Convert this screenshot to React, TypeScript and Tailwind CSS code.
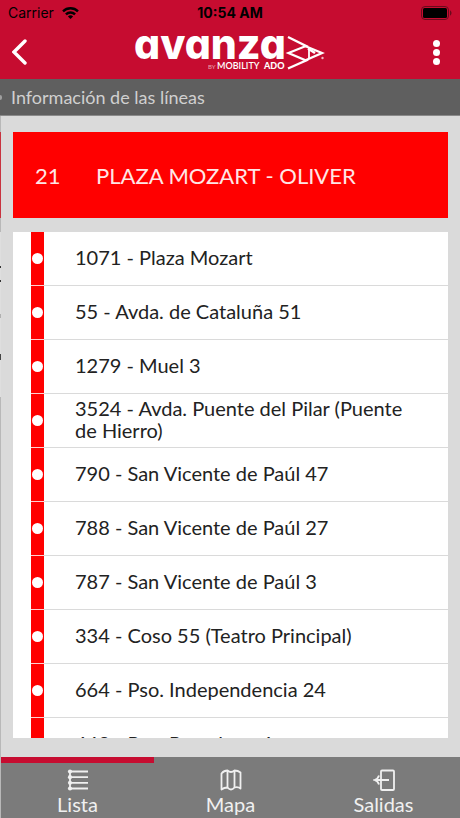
import React, { useState } from 'react';

interface Stop {
  code: string;
  name: string;
}

const stops: Stop[] = [
  { code: '1071', name: 'Plaza Mozart' },
  { code: '55', name: 'Avda. de Cataluña 51' },
  { code: '1279', name: 'Muel 3' },
  { code: '3524', name: 'Avda. Puente del Pilar (Puente de Hierro)' },
  { code: '790', name: 'San Vicente de Paúl 47' },
  { code: '788', name: 'San Vicente de Paúl 27' },
  { code: '787', name: 'San Vicente de Paúl 3' },
  { code: '334', name: 'Coso 55 (Teatro Principal)' },
  { code: '664', name: 'Pso. Independencia 24' },
  { code: '443', name: 'Pso. Pamplona 4' },
];

function StatusBar() {
  return (
    <div className="grid grid-cols-3 items-center h-6 px-2 text-sm text-black font-[Inter,sans-serif]">
      <div className="flex items-center gap-2">
        <span>Carrier</span>
        <svg width="17" height="12" viewBox="0 0 17 12" fill="none" stroke="currentColor" strokeWidth="2.4">
          <path d="M1 4.3a10.8 10.8 0 0 1 15 0" />
          <path d="M3.9 7.4a6.6 6.6 0 0 1 9.2 0" />
          <path d="M8.5 12 5.9 9.5a3.7 3.7 0 0 1 5.2 0z" fill="currentColor" stroke="none" />
        </svg>
      </div>
      <span className="text-center font-bold">10:54 AM</span>
      <svg className="justify-self-end" width="31" height="14" viewBox="0 0 31 14">
        <rect x="0.5" y="0.5" width="27" height="13" rx="3.5" fill="none" stroke="#6b0a1c" />
        <rect x="2" y="2" width="24" height="10" rx="1.5" />
        <path d="M29 4.5c2 .6 2 4.4 0 5z" fill="#6b0a1c" />
      </svg>
    </div>
  );
}

function Logo() {
  return (
    <svg width="196" height="42" viewBox="0 0 196 42" className="text-white" fill="currentColor" role="img" aria-label="avanza by Mobility ADO">
      <text x="5" y="28" fontSize="41" className="font-[Inter,sans-serif] font-extrabold [font-feature-settings:'cv11']">avanza</text>
      <g className="font-[Lato,sans-serif]">
        <text x="79" y="38" fontSize="6" opacity="0.6">BY</text>
        <text x="88" y="38" fontSize="9" className="font-semibold">MOBILITY</text>
        <text x="135" y="38" fontSize="9" className="font-black">ADO</text>
      </g>
      {/* Zigzag mark */}
      <g fill="none" stroke="currentColor" strokeWidth="2.3">
        <path d="M159 6l18 9-17.500 7 17.500 7.500-18 8" />
        <path d="M176 15l17 7-17 7.500" />
        <path d="M180 16.500v10.500" strokeWidth="1.800" />
        <path d="M179 17.500l7 4.500" strokeWidth="2.500" />
      </g>
      <circle cx="193.500" cy="27" r="1.200" opacity="0.7" />
    </svg>
  );
}

function ListIcon() {
  return (
    <svg width="22" height="22" viewBox="0 0 22 22" fill="none" stroke="currentColor" strokeWidth="1.8">
      <path d="M3 1.5v19M3 2.5h18M3 8.2h18M3 13.8h18M3 19.5h18" />
      <g fill="currentColor" stroke="none">
        <circle cx="3" cy="2.5" r="2.1" />
        <circle cx="3" cy="8.2" r="2.1" />
        <circle cx="3" cy="13.8" r="2.1" />
        <circle cx="3" cy="19.5" r="2.1" />
      </g>
    </svg>
  );
}

function MapIcon() {
  return (
    <svg width="22" height="22" viewBox="0 0 22 22" fill="none" stroke="currentColor" strokeWidth="1.8" strokeLinejoin="round">
      <path d="M1.5 4.500Q4 1.500 7.500 1.500q3.500 3 7 0 3.500 0 6 2v16q-2.500-2-6-1-3.500 4-7 0-3.500 0-6 2z" />
      <path d="M7.500 1.500v17M14.500 1.500v17" />
    </svg>
  );
}

function DeparturesIcon() {
  return (
    <svg width="22" height="22" viewBox="0 0 22 22" fill="none" stroke="currentColor" strokeWidth="1.8">
      <rect x="8" y="1.5" width="13" height="19.5" rx="1" />
      <path d="M16 11H2M6 6.500Q5 10 1.500 11 5 12 6 15.500" />
    </svg>
  );
}

const tabs = [
  { id: 'lista', label: 'Lista', Icon: ListIcon },
  { id: 'mapa', label: 'Mapa', Icon: MapIcon },
  { id: 'salidas', label: 'Salidas', Icon: DeparturesIcon },
];

export default function App() {
  const [activeTab, setActiveTab] = useState('lista');

  return (
    <div className="flex flex-col h-screen overflow-hidden bg-[#dadada] font-[Lato,sans-serif]">
      {/* Header */}
      <header className="shrink-0 bg-[#c60c30] pt-px">
        <StatusBar />
        <div className="flex items-center justify-between h-[54px] px-2 text-white">
          <button aria-label="Volver" className="p-1">
            <svg width="16" height="26" viewBox="0 0 16 26" fill="none" stroke="currentColor" strokeWidth="3.4" strokeLinecap="round">
              <path d="M13 2 2 13l11 11" />
            </svg>
          </button>
          <Logo />
          <button aria-label="Más opciones" className="flex flex-col gap-[2px] px-3">
            <span className="size-[7px] rounded-full bg-white" />
            <span className="size-[7px] rounded-full bg-white" />
            <span className="size-[7px] rounded-full bg-white" />
          </button>
        </div>
      </header>
      <div className="shrink-0 h-[37px] flex items-center gap-[9px] bg-[#5f5f5f] border-b border-[#8a8a8a] text-[#d0d0d0]">
        <span className="w-[2px] h-[5px] rounded-r-full bg-[#a0a0a0]" />
        <h1 className="text-lg">Información de las líneas</h1>
      </div>

      <div className="flex flex-1 min-h-0">
        {/* Edge of the previous screen */}
        <div className="flex flex-col w-px shrink-0 pt-4 gap-[14px] bg-[#b8b8b8]">
          <div className="h-[86px] bg-[#c8333f]" />
          <div className="flex flex-col h-[165px] pt-[34px] bg-[#dedede]">
            <div className="h-[2px] bg-[#333333]" />
            <div className="mt-3 h-[2px] bg-[#333333]" />
            <div className="mt-8 h-1 bg-[#b0b0b0]" />
            <div className="mt-9 h-[6px] bg-[#444444]" />
          </div>
        </div>

        <main className="flex flex-col flex-1 min-w-0 gap-[14px] pt-4 pb-[19px] px-3">
          <section className="shrink-0 flex items-center h-[86px] px-[22px] bg-[#ff0000] text-[22px] text-[#ffe6e6]">
            <span className="w-[61px]">21</span>
            <h2>PLAZA MOZART - OLIVER</h2>
          </section>

          {/* Stops */}
          <ol className="flex-1 min-h-0 overflow-hidden bg-white">
            {stops.map((stop) => (
              <li key={stop.code} className="flex h-[54px] pl-[18px]">
                <div className="flex w-[13px] shrink-0 items-center justify-center bg-[#ff0000] border-b border-[#ffd0d0]">
                  <span className="size-[11px] shrink-0 rounded-full bg-white" />
                </div>
                <div className="flex flex-1 items-center pl-[31px] pr-8 pb-[3px] border-b border-[#dadada] text-[20px] leading-[22px] text-[#222222]">
                  <span>{`${stop.code} - ${stop.name}`}</span>
                </div>
              </li>
            ))}
          </ol>
        </main>
      </div>

      {/* Tabs */}
      <nav className="shrink-0 grid grid-cols-3 h-[61px] border-l border-[#b8b8b8] bg-[#7b7b7b] text-[#f0f0f0]">
        {tabs.map(({ id, label, Icon }) => (
          <button
            key={id}
            onClick={() => setActiveTab(id)}
            className={`flex flex-col items-center pt-[6px] border-t-[6px] ${
              activeTab === id ? 'border-[#c60c30]' : 'border-transparent'
            }`}
          >
            <Icon />
            <span className="mt-[2px] text-[20px] leading-[22px]">{label}</span>
          </button>
        ))}
      </nav>
    </div>
  );
}
